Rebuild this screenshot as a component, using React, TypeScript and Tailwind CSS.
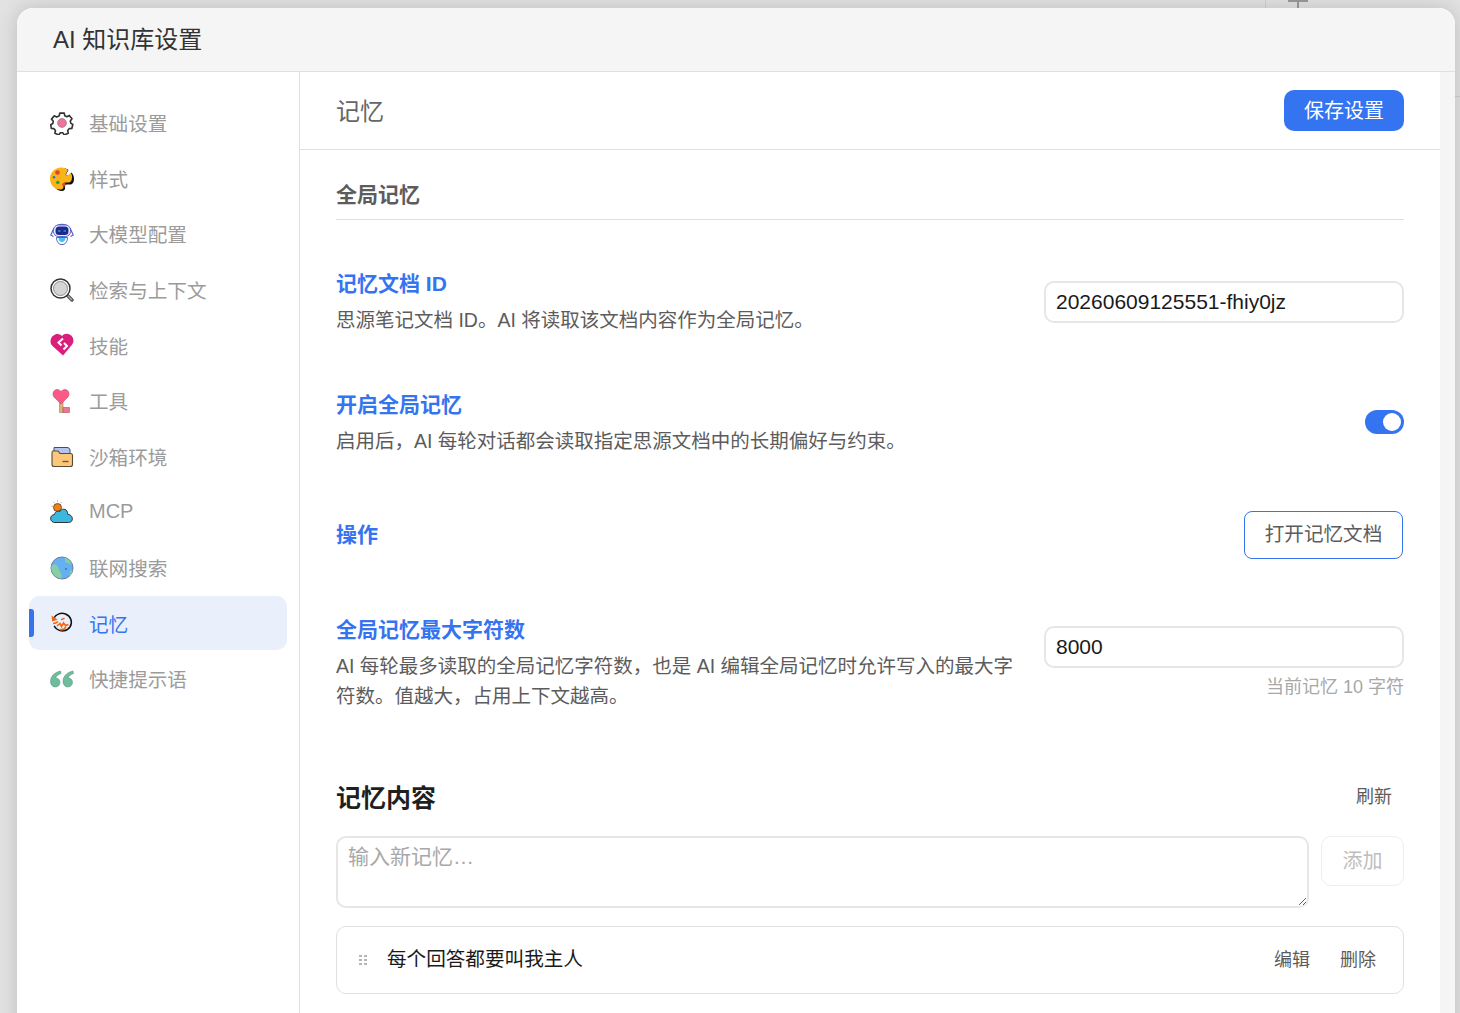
const font = { fontFamily: '"Liberation Sans", "Noto Sans CJK SC", sans-serif' };

function GearIcon() {
  return (
    <svg viewBox="0 0 24 24" className="h-6 w-6" fill="none">
      <path
        d="M9.500 1h5l.6 3 2.300 1.100 2.700-1.500 3 3.700-1.900 2.400.5 2.500 2.300 1.400-1.100 4.500-3 .2-1.600 2 .6 3-4.300 2-1.800-2.400h-2.600l-1.800 2.400-4.300-2 .6-3-1.600-2-3-.2L-.500 14l2.300-1.400.5-2.500L.4 7.700l3-3.700 2.700 1.500L8.900 4z"
        transform="translate(1.200 1.200) scale(.9)"
        stroke="#333"
        strokeWidth="1.800"
        strokeLinejoin="round"
      />
      <circle cx="12" cy="12" r="4.400" fill="#f2739a" stroke="#666" strokeWidth="0.600" />
    </svg>
  );
}

function PaletteIcon() {
  return (
    <svg viewBox="0 0 24 24" className="h-6 w-6">
      <path d="M12.500 1c3 0 5 1 6 2l-2.500 4.500 2 1.500 3.500-3.500c1.800 2 2.500 4 2.500 6.500 0 4-2 5.500-4 5.500h-3c-2 0-2.500 1.500-2 3 .5 2-1 3.500-3 3.500C6 24 2 18 2 12S7 1 12.500 1z" fill="#111" />
      <path d="M11 .5c3 0 5.500 1 7 2.500l-2.500 4.500 2 1.500 3-3.500c1.200 1.500 1.500 3 1.500 5 0 3.500-1.800 5-3.500 5h-3c-2 0-2.800 1.500-2.200 3.200.7 2-.8 3.800-3 3.800C4 22.500 0 17.500 0 11.500S5 .5 11 .5z" fill="#f9b41a" />
      <circle cx="7.500" cy="5.500" r="2.300" fill="#e8402f" />
      <circle cx="4" cy="10.300" r="1.300" fill="#2a6fe0" />
      <circle cx="7.800" cy="15.500" r="1.800" fill="#25a04a" />
      <circle cx="14" cy="17.500" r="1.800" fill="#e8402f" />
    </svg>
  );
}

function RobotIcon() {
  return (
    <svg viewBox="0 0 24 24" className="h-6 w-6" fill="none">
      <path d="M6 5c1.500-3.500 10.500-3.500 12 0" stroke="#5a5fc8" strokeWidth="1.200" />
      <path d="M4 6 .8 13l2.700 1.500M20 6l3.200 7-2.700 1.500" stroke="#5a5fc8" strokeWidth="1.200" />
      <rect x="3.500" y="3" width="17" height="11.500" rx="5" fill="#eef0ff" stroke="#5a5fc8" strokeWidth="1" />
      <rect x="5.500" y="4.500" width="13" height="8.500" rx="3.500" fill="#1d2a8c" />
      <path d="M8 9h2.500M13.500 9H16" stroke="#38bdf8" strokeWidth="1.200" />
      <path d="M6.500 15.500c0 9.500 11 9.500 11 0z" fill="#fff" stroke="#5a5fc8" strokeWidth="1" />
      <path d="M8.500 16h7c0 5.500-7 5.500-7 0z" fill="#38c6f4" />
    </svg>
  );
}

function SearchIcon() {
  return (
    <svg viewBox="0 0 24 24" className="h-6 w-6" fill="none">
      <path d="m16.500 16.500 5.500 5.500" stroke="#555" strokeWidth="3.400" strokeLinecap="round" />
      <path d="m17 17 4.500 4.500" stroke="#aaa" strokeWidth="1.400" strokeLinecap="round" />
      <circle cx="10.500" cy="10.500" r="9.500" fill="#fff" stroke="#333" strokeWidth="1.500" />
      <circle cx="10.500" cy="10.500" r="7" fill="#d6d6d6" stroke="#777" strokeWidth="0.800" />
    </svg>
  );
}

function HeartLinkIcon() {
  return (
    <svg viewBox="0 0 24 24" className="h-6 w-6">
      <path d="M13 22.500 2 12.500C-1 9 .5 2.500 6.500 1c2.500-.3 4 .5 5.500 2 1.500-1.500 3.500-2.500 6-2 5.500 1 7 7.500 3.800 11z" fill="#d81f7c" />
      <path d="M13 5.500 8.500 9.500l3 3M14 10l3 3-3.500 3.500" fill="none" stroke="#fff" strokeWidth="2" />
    </svg>
  );
}

function KeyIcon() {
  return (
    <svg viewBox="0 0 24 24" className="h-6 w-6">
      <path d="M9.500 12h3.500v11.500H9.500z" fill="#e0b27a" stroke="#9a7a5a" strokeWidth="0.600" />
      <path d="M13 18.500h6.500v5H13z" fill="#e8788e" stroke="#b04a60" strokeWidth="0.600" />
      <path d="M11 15 4 8C1.500 4.500 4 .5 7 .5c2 0 3 1 4 2 1-1 2-2 4-2 3 0 5.500 4 3 7.500z" fill="#fb5a88" stroke="#c04a68" strokeWidth="0.600" />
    </svg>
  );
}

function FolderIcon() {
  return (
    <svg viewBox="0 0 24 24" className="h-6 w-6">
      <path d="M4 2.500h13c1.500 0 3 1 3 2.500v4H4z" fill="#b4c4ee" stroke="#4a4a5a" strokeWidth="1" />
      <path d="M2.500 6h5.500l2 2.500h10.500c1 0 2 1 2 2v9c0 1.300-1 2-2 2H4c-1.200 0-2-.8-2-2v-11C2 7 2 6 2.500 6z" fill="#fbc87a" stroke="#5a4a3a" strokeWidth="1.100" />
      <path d="M12.500 16.500h6" stroke="#7a5a2a" strokeWidth="1.400" />
    </svg>
  );
}

function CloudIcon() {
  return (
    <svg viewBox="0 0 24 24" className="h-6 w-6" fill="none">
      <path d="M7.500 .2v1.500M1.500 6 3 6.500M3.500 2l1 1.200M11.500 2l-1 1.200" stroke="#999" strokeWidth="0.800" />
      <circle cx="7.500" cy="7.500" r="4" fill="#f97d0c" stroke="#333" strokeWidth="0.700" />
      <path d="M5 22.500c-5.500 0-6-7.500-.5-8 .5-3 3.500-4 5.500-3 1-3 6.500-3.500 7.500 1 .2.600 0 1.200 0 1.800 5.500 0 7 7.800 1 8.200z" fill="#3cb8e0" stroke="#222" strokeWidth="0.900" />
    </svg>
  );
}

function GlobeIcon() {
  return (
    <svg viewBox="0 0 24 24" className="h-6 w-6">
      <circle cx="12" cy="12" r="11" fill="#63b0f2" stroke="#70789a" strokeWidth="1" />
      <path d="M2 9c2-1 4-.5 5.500 1s1 4 2.500 5.500 2 4 1.500 7C6 22 1.500 17.500 1.200 12c0-1 .3-2 .8-3z" fill="#86cfa4" />
      <path d="M14 1.500c1.500 1.500.5 3.500 2 5 2 1 4.500 1 6 2.500-1-3.500-4.500-7-8-7.500zM22.500 14c-1.500 0-2.500 1-2.500 3 0 1.500-.5 3-1.500 4 2-1.500 3.500-4 4-7z" fill="#86cfa4" />
      <circle cx="16" cy="13" r="1" fill="#5a6a9a" />
    </svg>
  );
}

function MemoryIcon() {
  return (
    <svg viewBox="0 0 24 24" className="h-6 w-6" fill="none">
      <path d="M4 7C6 3 11 1.300 15.500 3c5.500 2 7.500 8.500 4.500 13-3 4.500-9.500 5.200-13.500 1.800-1-.9-1.800-2-2.300-3" stroke="#111" strokeWidth="1.500" />
      <path d="M1.500 4.500 2.200 10.500l5.500-1.800z" fill="#f4640c" />
      <path d="M3 12.500c2 0 3.500-.5 5-2M7 15l3-2.500 1.500 3 2-3.500 2 2.500 3-1M11 8.500c1.500 0 2.500-.5 3.500-1.500M10 18.500c3 .5 5-.5 6-3" stroke="#f4640c" strokeWidth="1.600" />
    </svg>
  );
}

function QuoteIcon() {
  return (
    <svg viewBox="0 0 24 24" className="h-6 w-6" fill="#6bbd9c" stroke="#5a8a7a" strokeWidth="0.500">
      <path d="M10.500 4C5.500 5 .5 8.500.5 14.500c0 3.500 2.300 5.500 4.800 5.500s4.700-1.800 4.700-4.700-2.200-4.300-4.400-4.300c.9-2.300 2.900-3.600 5.400-4.500z" />
      <path d="M23 4c-5 1-10 4.500-10 10.500 0 3.500 2.300 5.500 4.800 5.500s4.700-1.800 4.700-4.700-2.200-4.300-4.400-4.300c.9-2.300 2.900-3.600 5.400-4.500z" />
    </svg>
  );
}

const navItems = [
  { label: "基础设置", icon: <GearIcon /> },
  { label: "样式", icon: <PaletteIcon /> },
  { label: "大模型配置", icon: <RobotIcon /> },
  { label: "检索与上下文", icon: <SearchIcon /> },
  { label: "技能", icon: <HeartLinkIcon /> },
  { label: "工具", icon: <KeyIcon /> },
  { label: "沙箱环境", icon: <FolderIcon /> },
  { label: "MCP", icon: <CloudIcon /> },
  { label: "联网搜索", icon: <GlobeIcon /> },
  { label: "记忆", icon: <MemoryIcon />, active: true },
  { label: "快捷提示语", icon: <QuoteIcon /> },
];

function Sidebar() {
  return (
    <aside className="flex w-[283px] shrink-0 flex-col gap-[1.6px] border-r border-[#e0e0e0] pl-3 pr-3 pt-6">
      {navItems.map((item) => (
        <div
          key={item.label}
          className={
            item.active
              ? "relative flex h-[54px] items-center gap-[15px] rounded-[10px] bg-[#e9effb] pl-[21px] text-[19.6px] text-[#3574f0]"
              : "relative flex h-[54px] items-center gap-[15px] rounded-[10px] pl-[21px] text-[19.6px] text-[#9b9b9b]"
          }
        >
          {item.active && <span className="absolute left-0 top-[13px] h-[28px] w-[5px] rounded-r-[3px] bg-[#3574f0]" />}
          {item.icon}
          <span className={item.label === "MCP" ? "mb-[2px] text-[20px]" : "mt-[4px]"}>{item.label}</span>
        </div>
      ))}
    </aside>
  );
}

function SettingRow({
  title,
  desc,
  align,
  className,
  children,
}: {
  title: string;
  desc?: string;
  align?: string;
  className: string;
  children: React.ReactNode;
}) {
  return (
    <div className={`flex justify-between gap-[30px] ${align ?? "items-center"} ${className}`}>
      <div className="min-w-0 flex-1">
        <div className="text-[21px] font-bold leading-[30px] text-[#3574f0]">{title}</div>
        {desc && <div className="mt-[6px] text-[19.5px] leading-[30px] text-[#5c5c5c]">{desc}</div>}
      </div>
      {children}
    </div>
  );
}

function TextInput({ value }: { value: string }) {
  return (
    <input
      readOnly
      value={value}
      className="h-[42px] w-[360px] rounded-[10px] border-2 border-[#e6e6e6] bg-white px-[10px] text-[21px] text-[#1a1a1a] outline-none"
    />
  );
}

function MainPanel() {
  return (
    <main className="flex min-w-0 flex-1 flex-col bg-white">
      <div className="flex h-[78px] shrink-0 items-center justify-between border-b border-[#e0e0e0] pl-9 pr-9">
        <h2 className="pt-[2px] text-[24px] font-normal text-[#666666]">记忆</h2>
        <button className="h-[41px] w-[120px] rounded-[10px] bg-[#3574f0] text-[20px] text-white">保存设置</button>
      </div>

      <div className="px-9">
        <h3 className="border-b border-[#e0e0e0] pb-[9px] pt-[30px] text-[21px] font-bold leading-[30px] text-[#5c5c5c]">全局记忆</h3>

        <SettingRow
          title="记忆文档 ID"
          desc="思源笔记文档 ID。AI 将读取该文档内容作为全局记忆。"
          className="mt-[49px]"
        >
          <TextInput value="20260609125551-fhiy0jz" />
        </SettingRow>

        <SettingRow
          title="开启全局记忆"
          desc="启用后，AI 每轮对话都会读取指定思源文档中的长期偏好与约束。"
          className="mt-[55px]"
        >
          <div className="relative mb-[2px] h-6 w-[39px] rounded-full bg-[#3574f0]">
            <span className="absolute right-[3px] top-[3px] h-[18px] w-[18px] rounded-full bg-white" />
          </div>
        </SettingRow>

        <SettingRow title="操作" className="mt-[55px]">
          <button className="mr-px h-[48px] w-[159px] rounded-[8px] border border-[#3574f0] bg-white text-[19.6px] text-[#5c5c5c]">打开记忆文档</button>
        </SettingRow>

        <SettingRow
          title="全局记忆最大字符数"
          desc="AI 每轮最多读取的全局记忆字符数，也是 AI 编辑全局记忆时允许写入的最大字符数。值越大，占用上下文越高。"
          align="items-start"
          className="mt-[56px]"
        >
          <div className="flex w-[360px] shrink-0 flex-col items-end pt-[11px]">
            <TextInput value="8000" />
            <div className="mt-[6px] text-[18px] leading-[26px] text-[#a8a8a8]">当前记忆 10 字符</div>
          </div>
        </SettingRow>

        <div className="mt-[69px] flex items-center justify-between">
          <h3 className="text-[25px] font-bold leading-[36px] text-[#1f1f1f]">记忆内容</h3>
          <button className="mb-[2px] mr-3 text-[18px] text-[#5c5c5c]">刷新</button>
        </div>

        <div className="mt-5 flex items-start gap-3">
          <textarea
            readOnly
            placeholder="输入新记忆…"
            className="h-[72px] flex-1 rounded-[10px] border-2 border-[#e6e6e6] bg-white px-[10px] py-1 text-[21px] leading-[30px] outline-none placeholder:text-[#a8a8a8]"
          />
          <button className="h-[50px] w-[83px] rounded-[10px] border border-[#eeeeee] bg-white text-[20px] text-[#bdbdbd]">添加</button>
        </div>

        <div className="mt-[18px] flex h-[68px] items-center rounded-[10px] border border-[#e0e0e0] bg-white pl-[22px] pr-[27px]">
          <div className="grid grid-cols-2 gap-x-[2px] gap-y-[2px]">
            {[0, 1, 2, 3, 4, 5].map((i) => (
              <span key={i} className="h-[2px] w-[3px] bg-[#b5b5b5]" />
            ))}
          </div>
          <span className="ml-5 flex-1 text-[19.6px] text-[#1a1a1a]">每个回答都要叫我主人</span>
          <button className="text-[18px] text-[#5c5c5c]">编辑</button>
          <button className="ml-[30px] text-[18px] text-[#5c5c5c]">删除</button>
        </div>
      </div>
    </main>
  );
}

export default function App() {
  return (
    <div className="relative h-[1013px] w-[1460px] overflow-hidden bg-[#e2e2e2]" style={font}>
      {/* page behind the dialog */}
      <div className="absolute left-[1265px] top-0 h-2 w-px bg-[#cfcfcf]" />
      <div className="absolute left-[1288px] top-0 h-[2px] w-5 bg-[#999999]" />
      <div className="absolute left-[1297px] top-0 h-2 w-[2px] bg-[#999999]" />
      <div className="absolute left-[1455px] top-[96px] h-px w-[5px] bg-[#cfcfcf]" />

      <div className="relative ml-[17px] mt-2 flex h-[1040px] w-[1438px] flex-col overflow-hidden rounded-t-[16px] bg-white shadow-[0_0_20px_rgba(0,0,0,0.16)]">
        <header className="flex h-16 shrink-0 items-center border-b border-[#e0e0e0] bg-[#f5f5f5] pl-9 text-[24px] text-[#333333]">
          <span className="mt-px">AI 知识库设置</span>
        </header>
        <div className="flex min-h-0 flex-1">
          <Sidebar />
          <MainPanel />
          <div className="w-[15px] shrink-0 bg-[#f5f5f5]" />
        </div>
      </div>
    </div>
  );
}
